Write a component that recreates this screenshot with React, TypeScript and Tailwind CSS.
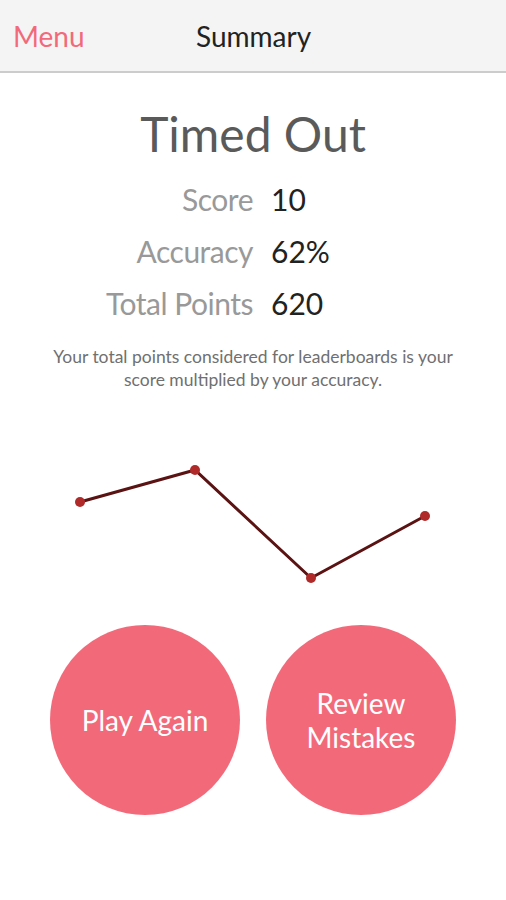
import React from "react";

const points = [
  { x: 80, y: 61 },
  { x: 195, y: 29 },
  { x: 311, y: 137 },
  { x: 425, y: 75 },
];

export default function App() {
  const stats = [
    { label: "Score", value: "10" },
    { label: "Accuracy", value: "62%" },
    { label: "Total Points", value: "620" },
  ];

  return (
    <div className="w-[506px] h-[900px] bg-white font-['Lato',sans-serif] flex flex-col">
      {/* header */}
      <div className="h-[73px] bg-[#f4f4f4] border-b-2 border-[#cccccc] flex items-center relative">
        <span className="pl-[13px] text-[28px] text-[#f26a7a]">Menu</span>
        <span className="absolute left-[196px] text-[28px] text-[#222]">Summary</span>
      </div>

      <h1 className="mt-[30px] text-center text-[48px] leading-[62px] text-[#5a5a5a]">Timed Out</h1>

      <div className="mt-[12px] flex flex-col">
        {stats.map((s) => (
          <div key={s.label} className="flex items-baseline h-[52px]">
            <span className="w-[253px] text-right text-[30px] text-[#999] tracking-[-0.5px]">{s.label}</span>
            <span className="pl-[18px] text-[30px] text-[#222]">{s.value}</span>
          </div>
        ))}
      </div>

      <p className="mt-[12px] px-[36px] text-center text-[17.5px] leading-[23px] text-[#707070]">
        Your total points considered for leaderboards is your score multiplied by your accuracy.
      </p>

      <svg className="mt-[50px]" width="506" height="160" viewBox="0 0 506 160">
        <polyline
          points={points.map((p) => `${p.x},${p.y}`).join(" ")}
          fill="none"
          stroke="#5a1212"
          strokeWidth="3"
        />
        {points.map((p) => (
          <circle key={p.x} cx={p.x} cy={p.y} r="5" fill="#b02a2a" />
        ))}
      </svg>

      <div className="mt-[24px] flex justify-center gap-[26px]">
        <button className="w-[190px] h-[190px] rounded-full bg-[#f26a7a] text-white text-[28px] leading-[34px]">
          Play Again
        </button>
        <button className="w-[190px] h-[190px] rounded-full bg-[#f26a7a] text-white text-[28px] leading-[34px]">
          Review
          <br />
          Mistakes
        </button>
      </div>
    </div>
  );
}
